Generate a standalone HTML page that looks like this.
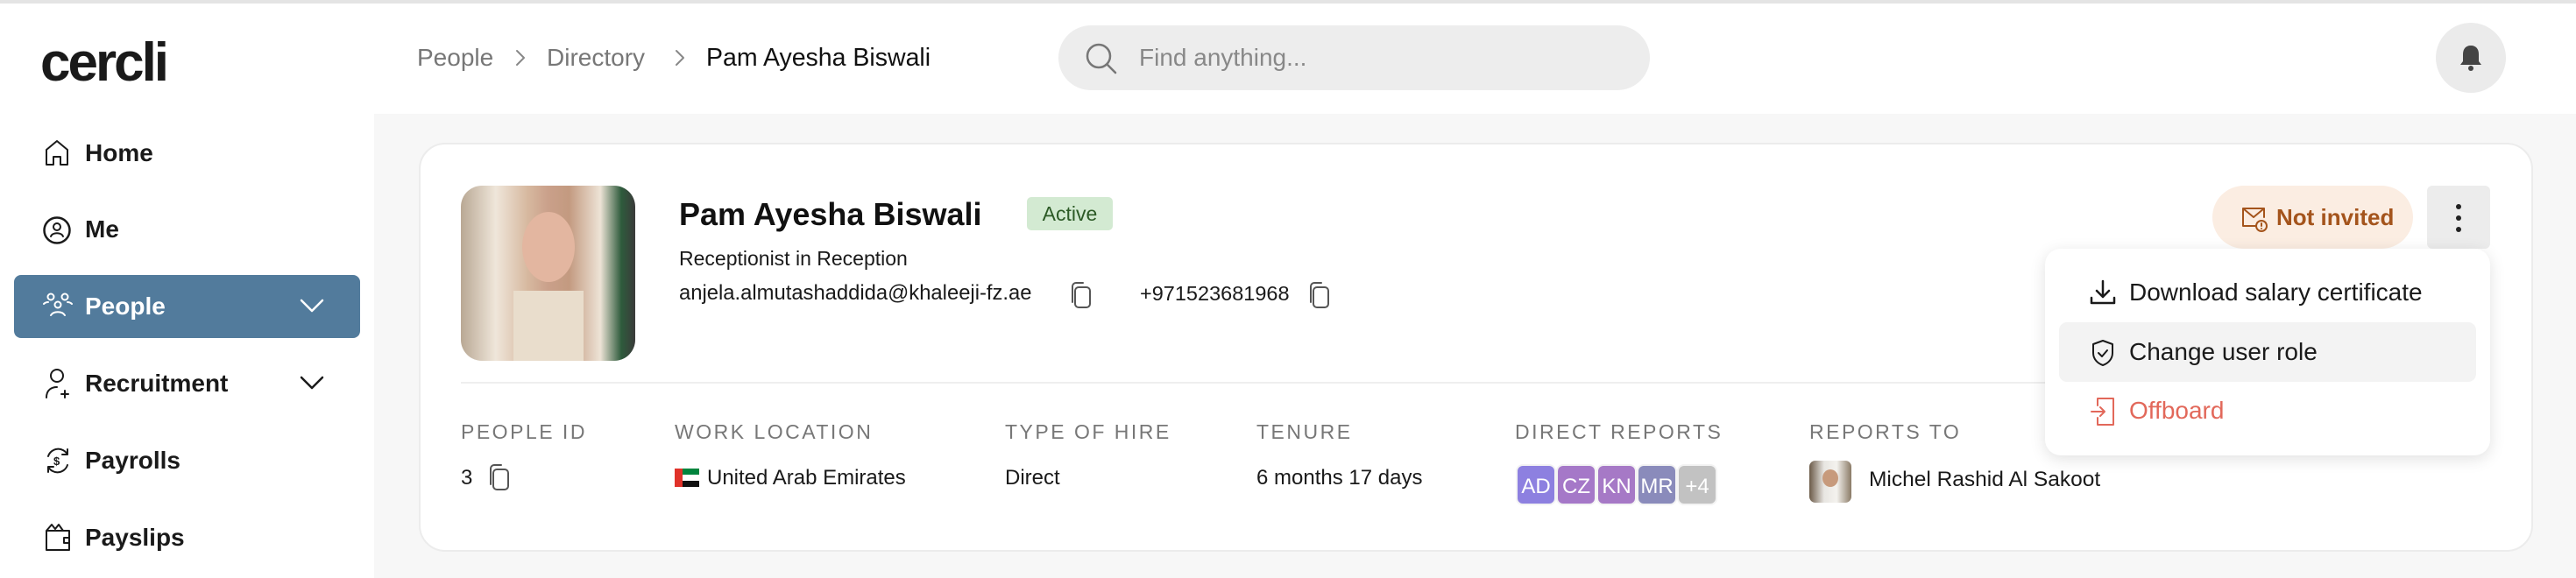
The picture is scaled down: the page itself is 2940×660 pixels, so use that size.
<!DOCTYPE html>
<html><head><meta charset="utf-8"><style>
*{box-sizing:border-box;margin:0;padding:0}
body{width:2940px;height:660px;overflow:hidden;background:#fff;font-family:"Liberation Sans",sans-serif;color:#1a1a1a;position:relative}
.a{position:absolute;white-space:nowrap}
svg{position:absolute;fill:none;stroke:#1a1a1a;stroke-width:2;stroke-linecap:round;stroke-linejoin:round}
.nav{font-size:28px;font-weight:600;line-height:32px}
.lab{font-size:23px;letter-spacing:2.5px;color:#777;line-height:26px}
.val{font-size:24px;line-height:28px}
.av{position:absolute;top:530px;width:46px;height:47px;border-radius:8px;color:#fff;font-size:24px;line-height:47px;text-align:center;border:2px solid #f3f3f3}
</style></head><body>
<div class="a" style="left:0;top:0;width:2940px;height:4px;background:#e4e4e4"></div>
<div class="a" style="left:427px;top:130px;width:2513px;height:530px;background:#f7f7f7"></div>
<div class="a" style="left:46px;top:40px;font-size:62px;font-weight:900;letter-spacing:-3px;line-height:64px">cercli</div>

<!-- breadcrumb -->
<div class="a" style="left:476px;top:50px;font-size:28px;line-height:32px;color:#777">People</div>
<svg style="left:584px;top:55px" width="20" height="22" viewBox="0 0 20 22"><path d="M6 3l8 8-8 8" stroke="#888"/></svg>
<div class="a" style="left:624px;top:50px;font-size:28px;line-height:32px;color:#777">Directory</div>
<svg style="left:766px;top:55px" width="20" height="22" viewBox="0 0 20 22"><path d="M6 3l8 8-8 8" stroke="#888"/></svg>
<div class="a" style="left:806px;top:50px;font-size:28.5px;line-height:32px;color:#111">Pam Ayesha Biswali</div>

<div class="a" style="left:1208px;top:29px;width:675px;height:74px;border-radius:37px;background:#ededed"></div>
<svg style="left:1238px;top:48px" width="38" height="38" viewBox="0 0 38 38"><circle cx="16" cy="16" r="13" stroke="#777" stroke-width="2.5"/><path d="M26 26l9 9" stroke="#777" stroke-width="2.5"/></svg>
<div class="a" style="left:1300px;top:50px;font-size:28px;line-height:32px;color:#888">Find anything...</div>

<div class="a" style="left:2780px;top:26px;width:80px;height:80px;border-radius:50%;background:#ebebeb"></div>
<svg style="left:2806px;top:50px" width="28" height="32" viewBox="0 0 28 32"><path d="M14 2c-6 0-9 4-9 10v8l-3 4h24l-3-4v-8c0-6-3-10-9-10z" fill="#444" stroke="none"/><circle cx="14" cy="28" r="3" fill="#444" stroke="none"/></svg>

<!-- sidebar -->
<svg style="left:50px;top:158px" width="30" height="32" viewBox="0 0 30 32"><path d="M3 30V13L15 3l12 10v17h-8v-9h-8v9z"/></svg>
<div class="a nav" style="left:97px;top:159px">Home</div>
<svg style="left:48px;top:246px" width="34" height="34" viewBox="0 0 34 34"><circle cx="17" cy="17" r="14.5" stroke-width="2.5"/><circle cx="17" cy="13" r="4"/><path d="M10 24c2-5 12-5 14 0"/></svg>
<div class="a nav" style="left:97px;top:246px">Me</div>
<div class="a" style="left:16px;top:314px;width:395px;height:72px;border-radius:8px;background:#527b9c"></div>
<svg style="left:48px;top:334px" width="36" height="30" viewBox="0 0 36 30"><g stroke="#fff"><circle cx="10" cy="5" r="3.5"/><circle cx="26" cy="5" r="3.5"/><circle cx="18" cy="14" r="3.5"/><path d="M2 13c2-2 4-2 5-2M34 13c-2-2-4-2-5-2M10 26c3-5 13-5 16 0"/></g></svg>
<div class="a nav" style="left:97px;top:334px;color:#fff">People</div>
<svg style="left:340px;top:338px" width="32" height="22" viewBox="0 0 32 22"><path d="M4 5l12 12 12-12" stroke="#fff" stroke-width="2.5"/></svg>
<svg style="left:50px;top:420px" width="34" height="36" viewBox="0 0 34 36"><circle cx="15" cy="9" r="7"/><path d="M3 34c0-9 6-12 12-12M24 26v8M20 30h8"/></svg>
<div class="a nav" style="left:97px;top:422px">Recruitment</div>
<svg style="left:340px;top:426px" width="32" height="22" viewBox="0 0 32 22"><path d="M4 5l12 12 12-12" stroke-width="2.5"/></svg>
<svg style="left:50px;top:510px" width="32" height="32" viewBox="0 0 32 32"><path d="M5 11a12 12 0 0 1 22-2M27 21a12 12 0 0 1-22 2M27 3v6h-6M5 29v-6h6"/><text x="11" y="21" font-size="13" font-weight="700" fill="#1a1a1a" stroke="none" font-family="Liberation Sans">$</text></svg>
<div class="a nav" style="left:97px;top:510px">Payrolls</div>
<svg style="left:50px;top:596px" width="32" height="34" viewBox="0 0 32 34"><path d="M3 10h26v22H3zM3 10l6-7 4 5 4-5 5 7M29 18h-6v6h6"/></svg>
<div class="a nav" style="left:97px;top:598px">Payslips</div>

<!-- card -->
<div class="a" style="left:478px;top:163px;width:2413px;height:467px;border-radius:30px;background:#fff;border:2px solid #ececec"></div>
<div class="a" style="left:526px;top:212px;width:199px;height:200px;border-radius:24px;overflow:hidden;background:linear-gradient(90deg,#b9a894 0%,#efe6da 20%,#d7b9a0 38%,#caa08a 50%,#c39a80 62%,#ede3d6 80%,#2e5b3c 92%,#3a3a3a 100%)">
<div style="position:absolute;left:70px;top:30px;width:60px;height:80px;border-radius:50%;background:#e3b6a0"></div>
<div style="position:absolute;left:60px;top:120px;width:80px;height:80px;background:#e9ddcc"></div></div>
<div class="a" style="left:775px;top:224px;font-size:36px;font-weight:700;line-height:42px;color:#111">Pam Ayesha Biswali</div>
<div class="a" style="left:1172px;top:225px;width:98px;height:38px;border-radius:5px;background:#d3ead2;color:#2c5a26;font-size:23px;line-height:38px;text-align:center">Active</div>
<div class="a val" style="left:775px;top:281px;font-size:23px">Receptionist in Reception</div>
<div class="a val" style="left:775px;top:321px;font-size:23.8px">anjela.almutashaddida@khaleeji-fz.ae</div>
<svg style="left:1218px;top:320px" width="32" height="34" viewBox="0 0 32 34"><rect x="9" y="8" width="17" height="23" rx="4" stroke="#555"/><path d="M6 25V7a4 4 0 0 1 4-4h8" stroke="#555"/></svg>
<div class="a val" style="left:1301px;top:321px;font-size:23.5px">+971523681968</div>
<svg style="left:1490px;top:320px" width="32" height="34" viewBox="0 0 32 34"><rect x="9" y="8" width="17" height="23" rx="4" stroke="#555"/><path d="M6 25V7a4 4 0 0 1 4-4h8" stroke="#555"/></svg>

<div class="a" style="left:526px;top:436px;width:2316px;height:2px;background:#efefef"></div>

<div class="a lab" style="left:526px;top:480px">PEOPLE ID</div>
<div class="a lab" style="left:770px;top:480px">WORK LOCATION</div>
<div class="a lab" style="left:1147px;top:480px">TYPE OF HIRE</div>
<div class="a lab" style="left:1434px;top:480px">TENURE</div>
<div class="a lab" style="left:1729px;top:480px">DIRECT REPORTS</div>
<div class="a lab" style="left:2065px;top:480px">REPORTS TO</div>

<div class="a val" style="left:526px;top:532px">3</div>
<svg style="left:554px;top:528px" width="32" height="34" viewBox="0 0 32 34"><rect x="9" y="8" width="17" height="23" rx="4" stroke="#555"/><path d="M6 25V7a4 4 0 0 1 4-4h8" stroke="#555"/></svg>
<div class="a" style="left:770px;top:535px;width:28px;height:21px;background:linear-gradient(#00843d 33%,#fff 33%,#fff 66%,#111 66%)"><div style="width:9px;height:21px;background:#e0322a"></div></div>
<div class="a val" style="left:807px;top:532px">United Arab Emirates</div>
<div class="a val" style="left:1147px;top:532px">Direct</div>
<div class="a val" style="left:1434px;top:532px">6 months 17 days</div>
<div class="av" style="left:1730px;background:#8d80e0">AD</div>
<div class="av" style="left:1776px;background:#a578c8">CZ</div>
<div class="av" style="left:1822px;background:#a679c6">KN</div>
<div class="av" style="left:1868px;background:#8a8bbb">MR</div>
<div class="av" style="left:1914px;background:#c2c2c2">+4</div>
<div class="a" style="left:2065px;top:526px;width:48px;height:48px;border-radius:7px;background:linear-gradient(90deg,#6b5a48,#e8e6e2 35%,#f4f2ee 65%,#8a7a66)"><div style="margin:10px 0 0 15px;width:18px;height:20px;border-radius:50%;background:#c79a7c"></div></div>
<div class="a val" style="left:2133px;top:534px;font-size:24.5px">Michel Rashid Al Sakoot</div>

<!-- actions -->
<div class="a" style="left:2525px;top:212px;width:229px;height:72px;border-radius:36px;background:#fbede2"></div>
<svg style="left:2556px;top:232px" width="34" height="34" viewBox="0 0 34 34"><g stroke="#a4541c"><path d="M18 26H4V6h24v10M4 6l12 10 12-10"/><circle cx="25" cy="26" r="6"/><path d="M25 23v3M25 29v0"/></g></svg>
<div class="a" style="left:2598px;top:232px;font-size:26px;font-weight:600;line-height:32px;color:#a4541c">Not invited</div>
<div class="a" style="left:2770px;top:212px;width:72px;height:72px;border-radius:6px;background:#ececec"></div>
<div class="a" style="left:2803px;top:233px;width:6px;height:6px;border-radius:50%;background:#222"></div>
<div class="a" style="left:2803px;top:246px;width:6px;height:6px;border-radius:50%;background:#222"></div>
<div class="a" style="left:2803px;top:259px;width:6px;height:6px;border-radius:50%;background:#222"></div>

<div class="a" style="left:2334px;top:284px;width:508px;height:236px;border-radius:18px;background:#fff;box-shadow:0 4px 18px rgba(0,0,0,0.12)"></div>
<svg style="left:2384px;top:318px" width="32" height="32" viewBox="0 0 32 32"><path d="M16 3v18M9 14l7 7 7-7M3 22v6h26v-6" stroke-width="2.5"/></svg>
<div class="a" style="left:2430px;top:316px;font-size:28px;line-height:36px">Download salary certificate</div>
<div class="a" style="left:2350px;top:368px;width:476px;height:68px;border-radius:9px;background:#f3f3f3"></div>
<svg style="left:2384px;top:386px" width="32" height="34" viewBox="0 0 32 34"><path d="M16 3l11 4v10c0 7-5 12-11 14C10 29 5 24 5 17V7z"/><path d="M11 17l4 4 6-7"/></svg>
<div class="a" style="left:2430px;top:384px;font-size:28px;line-height:36px">Change user role</div>
<svg style="left:2384px;top:452px" width="32" height="36" viewBox="0 0 32 36"><g stroke="#e2685a"><path d="M10 3h18v30H10M10 33v-8M10 3v8M3 18h15M13 13l5 5-5 5"/></g></svg>
<div class="a" style="left:2430px;top:451px;font-size:28px;line-height:36px;color:#e2685a">Offboard</div>
</body></html>
